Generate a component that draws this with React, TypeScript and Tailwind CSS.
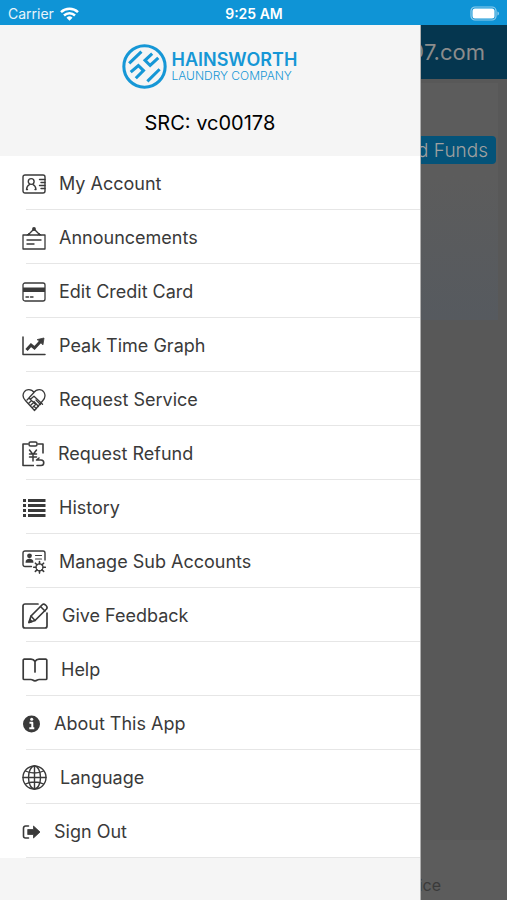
import type { ReactNode } from 'react';

interface IconProps {
  w: number;
  h: number;
  children: ReactNode;
}

function Icon({ w, h, children }: IconProps) {
  return (
    <svg
      width={w}
      height={h}
      viewBox={`0 0 ${w} ${h}`}
      fill="none"
      stroke="currentColor"
      strokeWidth={1.4}
      strokeLinecap="round"
      strokeLinejoin="round"
      className="shrink-0"
      aria-hidden="true"
    >
      {children}
    </svg>
  );
}

const items: { label: string; icon: ReactNode }[] = [
  {
    label: 'My Account',
    icon: (
      <Icon w={24} h={20}>
        <rect x="1" y="1" width="22" height="18" rx="2" />
        <circle cx="9.2" cy="7.5" r="2.9" />
        <path d="M4.5 15.5c.3-3 1.4-4.3 3-4.9M14 15.5c-.3-3-1.4-4.3-3-4.9M4.5 15.5h1M13 15.5h1M17.5 5.5H23M19 8.5h4M17.5 11.5H23M19 14.5h4" />
      </Icon>
    ),
  },
  {
    label: 'Announcements',
    icon: (
      <Icon w={24} h={24}>
        <rect x="1" y="9" width="22" height="14" strokeWidth={1.3} />
        <path d="M6 9l5-5M18 9l-5-5M5 14h14M5 18h7" />
        <circle cx="12" cy="3" r="1.2" fill="currentColor" />
        <path d="M5 9l1.500-1.500L8 9M16 9l1.500-1.500L19 9" strokeWidth={1} />
      </Icon>
    ),
  },
  {
    label: 'Edit Credit Card',
    icon: (
      <Icon w={24} h={20}>
        <rect x="1" y="1" width="22" height="18" rx="2" strokeWidth={1.3} />
        <path d="M1 5.500h22v4.500H1z" fill="currentColor" stroke="none" />
        <path d="M4 15h2.500M8.500 15H11" />
      </Icon>
    ),
  },
  {
    label: 'Peak Time Graph',
    icon: (
      <Icon w={24} h={20}>
        <path d="M1 1v17.500h22" strokeWidth={1.5} />
        <path d="M4.500 14l4.500-5 3.500 3 6-6.500" strokeWidth={3} strokeLinecap="butt" strokeLinejoin="miter" />
        <path d="M15.500 3.500l6.500-1.500-1 6.500z" fill="currentColor" strokeWidth={0.8} />
      </Icon>
    ),
  },
  {
    label: 'Request Service',
    icon: (
      <Icon w={24} h={24}>
        <path d="M12 4.500C9.500.6 4 .8 2 4.300c-1.800 3.200-.8 6 1.400 8.200L12.500 22.500l8-9.500c2.500-2.500 3.300-5.500 1.500-8.700-2-3.500-7.500-3.700-10 .2L7.500 9.300c-.6 1 .8 2 1.800 1.200L12 8.200l8.500 8" strokeWidth={1.3} />
        <path d="M5 12l2-2 2.500 2.500-3 3M6.500 15.500l3-3 2 2-3 3M8.500 17.500l3-3 2 2-3 3M14 12l4.500 4.500M12 13.500l4.500 5M12 18.500l2.500 2" strokeWidth={1.3} />
      </Icon>
    ),
  },
  {
    label: 'Request Refund',
    icon: (
      <Icon w={23} h={26}>
        <path d="M6.500 3H1v21.500h11M15.500 3H21v9.500" strokeWidth={1.6} strokeLinecap="butt" />
        <rect x="7" y="1" width="8" height="4" rx="1.500" strokeWidth={1.5} />
        <path d="M7.500 9l3.500 4.500L14.500 9M11 13.500V20M7.500 13h7M7.500 16h7" strokeWidth={1.5} />
        <path d="M17 17l-2.500 2h4.500a2.700 2.700 0 010 5.500h-4" strokeWidth={1.6} />
      </Icon>
    ),
  },
  {
    label: 'History',
    icon: (
      <Icon w={24} h={20}>
        <path
          d="M1 2.500h3M1 7.500h3M1 12.500h3M1 17.500h3M6 2.500h17.500M6 7.500h17.500M6 12.500h17.500M6 17.500h17.500"
          strokeWidth={3}
          strokeLinecap="butt"
        />
      </Icon>
    ),
  },
  {
    label: 'Manage Sub Accounts',
    icon: (
      <Icon w={24} h={24}>
        <path d="M9.500 16.500H3a2 2 0 01-2-2V3a2 2 0 012-2h18a2 2 0 012 2v7" />
        <circle cx="7.500" cy="5.800" r="2.400" fill="currentColor" stroke="none" />
        <path d="M3.500 12.800c0-3 1.500-4 4-4s4 1 4 4z" fill="currentColor" stroke="none" />
        <path d="M13.500 5.500h6M13.500 9h6" strokeWidth={1.2} />
        <circle cx="17.500" cy="17.300" r="3.500" strokeWidth={1.3} />
        <path
          d="M17.500 13.800v-2.300M17.500 20.800v2.300M14 17.300h-2.300M21 17.300h2.300M15 14.800l-1.600-1.600M20 14.800l1.600-1.600M15 19.800l-1.600 1.600M20 19.800l1.600 1.600"
          strokeWidth={1.6}
        />
      </Icon>
    ),
  },
  {
    label: 'Give Feedback',
    icon: (
      <Icon w={27} h={27}>
        <path d="M16 2H3a2 2 0 00-2 2v20a2 2 0 002 2h20a2 2 0 002-2V11" strokeWidth={1.7} />
        <path d="M7 20.500l2-6.500L20.500 2.500c1.500-1.500 6 2 4 4.500L13 18.500z" strokeWidth={1.7} />
        <path d="M18.500 4.500l4.500 4.500M9 14l4 4.500M7 20.500l1-3 2 2z" strokeWidth={1.5} />
      </Icon>
    ),
  },
  {
    label: 'Help',
    icon: (
      <Icon w={26} h={24}>
        <path
          d="M13 3.500C12 1.800 10.500 1.200 9 1.200H2.200a1 1 0 00-1 1v18.300a1 1 0 001 1H9c1.500 0 2 1.300 4 1.300s2.500-1.300 4-1.300h6.800a1 1 0 001-1V2.200a1 1 0 00-1-1H17c-1.500 0-3 .6-4 2.300zM13 3.500V14"
          strokeWidth={1.7}
        />
      </Icon>
    ),
  },
  {
    label: 'About This App',
    icon: (
      <Icon w={19} h={18}>
        <circle cx="9.500" cy="9" r="8.500" fill="currentColor" stroke="none" />
        <path d="M7.500 7.700h2.800v5.300M7.300 13.300h5" stroke="#fff" strokeWidth={2} strokeLinecap="butt" />
        <circle cx="9.700" cy="4.200" r="1.500" fill="#fff" stroke="none" />
      </Icon>
    ),
  },
  {
    label: 'Language',
    icon: (
      <Icon w={25} h={25}>
        <circle cx="12.500" cy="12.500" r="11.500" />
        <ellipse cx="12.500" cy="12.500" rx="6" ry="11.500" />
        <path d="M12.500 1v23M1 12.500h23M3.500 6c5 2.600 13 2.600 18 0M3.500 19c5-2.600 13-2.600 18 0" />
      </Icon>
    ),
  },
  {
    label: 'Sign Out',
    icon: (
      <Icon w={19} h={16}>
        <path d="M6.500 2H3.500A2 2 0 001.500 4v8a2 2 0 002 2h3" strokeWidth={1.6} />
        <path d="M6 5.500h5.500V2L18 8l-6.500 6v-3.500H6z" fill="currentColor" strokeWidth={0.8} />
      </Icon>
    ),
  },
];

function StatusBar() {
  return (
    <div className="grid h-[25px] grid-cols-3 items-center bg-[#0f94d6] pt-0.5 pr-[7px] pl-2 text-sm text-white">
      <div className="flex items-center gap-1.5">
        <span className="opacity-90">Carrier</span>
        <svg width="19" height="14" viewBox="0 0 19 14" fill="none" stroke="currentColor" strokeWidth={2.5} aria-hidden="true">
          <path d="M1 5.200a12.300 12.300 0 0117 0M4 8.500a8 8 0 0111 0" />
          <path d="M9.500 13.800L6.500 10.800a4.300 4.300 0 016 0z" fill="currentColor" stroke="none" />
        </svg>
      </div>
      <span className="text-center font-semibold">9:25 AM</span>
      <svg width="30" height="15" viewBox="0 0 30 15" className="justify-self-end" aria-hidden="true">
        <rect x="1" y="1" width="25" height="13" rx="4" fill="none" stroke="#fff" strokeOpacity=".55" strokeWidth="1.200" />
        <rect x="2.500" y="2.500" width="22" height="10" rx="2.500" fill="#fff" />
        <path d="M27.500 5.500v4c1.800-.5 1.800-3.500 0-4z" fill="#fff" fillOpacity=".6" />
      </svg>
    </div>
  );
}

function Logo() {
  return (
    <div className="flex items-center gap-1 text-[#1697d6]">
      <svg width="45" height="45" viewBox="0 0 44 44" fill="none" stroke="currentColor" strokeWidth={3} aria-hidden="true">
        <circle cx="22" cy="22" r="20.200" />
        <path d="M7 19L19 7.500M24.800 36.500l12-11.800M29.500 9.500l-7 6.500 5 5 8-7.500M8.500 27.500l7.500-6.500 5 5-7.500 7.500" />
      </svg>
      <div className="flex flex-col">
        <span className="text-lg leading-[18px] font-semibold">HAINSWORTH</span>
        <span className="text-xs leading-[14px] font-light">LAUNDRY COMPANY</span>
      </div>
    </div>
  );
}

function Drawer() {
  return (
    <aside className="z-10 col-start-1 row-start-1 flex w-[83%] flex-col border-r border-[#b0b0b0] bg-[#f5f5f5]">
      <header className="flex h-[131px] flex-col items-center pt-[19px]">
        <Logo />
        <p className="mt-5 text-xl leading-7 text-black">SRC: vc00178</p>
      </header>
      <nav className="bg-white text-[#3a3a3a]">
        <ul>
          {items.map((item) => (
            <li key={item.label}>
              <a href="#" className="flex h-[53px] items-center gap-[13px] pt-0.5 pl-[22px] text-lg">
                {item.icon}
                {item.label}
              </a>
              <div className="ml-[26px] h-px bg-[#e6e6e6]" />
            </li>
          ))}
        </ul>
      </nav>
    </aside>
  );
}

function DimmedHome() {
  return (
    <main className="col-start-1 row-start-1 flex flex-col bg-[#585858] text-[#8c8c8c]">
      <header className="flex h-[54px] items-center justify-end bg-[#05364f] pr-[22px] text-[22px]">@7.com</header>
      <section className="mt-1 mr-[9px] flex h-[237px] flex-col items-end bg-linear-to-b from-[#5c5c5c] from-40% to-[#565a5f] pt-[53px] pr-0.5">
        <button className="h-7 rounded bg-[#045379] px-2 pt-px text-[19px] leading-7 font-light text-[#a0a0a0]">Add Funds</button>
      </section>
      <footer className="mt-auto flex h-[60px] items-end justify-end bg-[#5c5c5c] pr-[66px] pb-[3px] text-base text-[#3a3a3a]">
        Service
      </footer>
    </main>
  );
}

export default function App() {
  return (
    <div className="flex min-h-screen flex-col font-['Inter',sans-serif]">
      <StatusBar />
      <div className="grid flex-1 grid-cols-1">
        <DimmedHome />
        <Drawer />
      </div>
    </div>
  );
}
